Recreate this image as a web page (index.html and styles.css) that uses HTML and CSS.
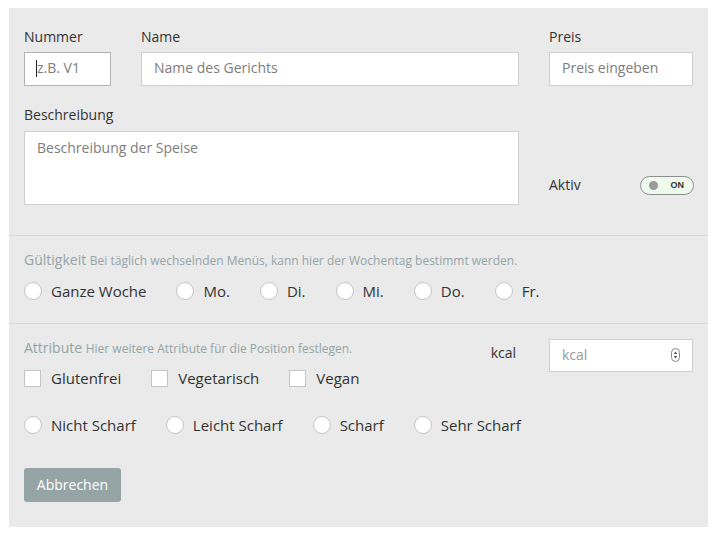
FILE: index.html
```html
<!DOCTYPE html>
<html lang="de">
<head>
<meta charset="utf-8">
<title>Position bearbeiten</title>
<link rel="stylesheet" href="styles.css">
</head>
<body>
<form class="panel">
  <section class="section section-main">
    <div class="grid">
      <div class="field">
        <label class="label">Nummer</label>
        <div class="input-wrap">
          <input class="input input-focus" type="text" placeholder="z.B. V1">
          <span class="caret"></span>
        </div>
      </div>
      <div class="field">
        <label class="label">Name</label>
        <input class="input" type="text" placeholder="Name des Gerichts">
      </div>
      <div class="field">
        <label class="label">Preis</label>
        <input class="input" type="text" placeholder="Preis eingeben">
      </div>
      <div class="field field-desc">
        <label class="label">Beschreibung</label>
        <textarea class="input textarea" placeholder="Beschreibung der Speise"></textarea>
      </div>
      <div class="aktiv">
        <span class="aktiv-label">Aktiv</span>
        <span class="toggle"><span class="toggle-dot"></span><span class="toggle-text">ON</span></span>
      </div>
    </div>
  </section>

  <section class="section section-days">
    <h3 class="heading">Gültigkeit <small class="sub">Bei täglich wechselnden Menüs, kann hier der Wochentag bestimmt werden.</small></h3>
    <div class="options">
      <label class="opt"><input type="radio" name="day" class="radio"><span>Ganze Woche</span></label>
      <label class="opt"><input type="radio" name="day" class="radio"><span>Mo.</span></label>
      <label class="opt"><input type="radio" name="day" class="radio"><span>Di.</span></label>
      <label class="opt"><input type="radio" name="day" class="radio"><span>Mi.</span></label>
      <label class="opt"><input type="radio" name="day" class="radio"><span>Do.</span></label>
      <label class="opt"><input type="radio" name="day" class="radio"><span>Fr.</span></label>
    </div>
  </section>

  <section class="section section-attr">
    <div class="attr-grid">
      <div class="attr-left">
        <div class="attr-head">
          <h3 class="heading">Attribute <small class="sub">Hier weitere Attribute für die Position festlegen.</small></h3>
          <span class="kcal-label">kcal</span>
        </div>
        <div class="options">
          <label class="opt opt-cb"><input type="checkbox" class="checkbox"><span>Glutenfrei</span></label>
          <label class="opt opt-cb"><input type="checkbox" class="checkbox"><span>Vegetarisch</span></label>
          <label class="opt opt-cb"><input type="checkbox" class="checkbox"><span>Vegan</span></label>
        </div>
      </div>
      <div class="kcal-wrap">
        <input class="input kcal" type="text" placeholder="kcal">
        <svg class="spinner" width="9" height="14" viewBox="0 0 9 14" aria-hidden="true">
          <rect x="0.5" y="0.5" width="8" height="13" rx="4" fill="#fff" stroke="#8a8a8a"/>
          <path d="M4.5 3.6 L6.3 6 L2.7 6 Z" fill="#555"/>
          <path d="M4.5 10.4 L6.3 8 L2.7 8 Z" fill="#555"/>
        </svg>
      </div>
    </div>
    <div class="options options-spice">
      <label class="opt"><input type="radio" name="spice" class="radio"><span>Nicht Scharf</span></label>
      <label class="opt"><input type="radio" name="spice" class="radio"><span>Leicht Scharf</span></label>
      <label class="opt"><input type="radio" name="spice" class="radio"><span>Scharf</span></label>
      <label class="opt"><input type="radio" name="spice" class="radio"><span>Sehr Scharf</span></label>
    </div>
    <button type="button" class="btn">Abbrechen</button>
  </section>
</form>
</body>
</html>
```

FILE: styles.css
```css
* { box-sizing: border-box; }

html, body { background: #fff; }

body {
  margin: 8px 7px 0 9px;
  font-family: "Open Sans", "Liberation Sans", sans-serif;
  color: #333;
  font-size: 14px;
}

.panel {
  background: #eaeaea;
  padding: 0 15px 25px;
}

.section {
  border-bottom: 1px solid #d6d6d6;
  margin: 0 -15px;
  padding-left: 15px;
  padding-right: 15px;
}

.section-main { padding-top: 19px; padding-bottom: 30px; }
.section-days { padding-top: 14px; padding-bottom: 21px; }
.section-attr { padding-top: 14px; border-bottom: 0; }

.grid {
  display: grid;
  grid-template-columns: 87px 378px 144px;
  column-gap: 30px;
  row-gap: 19px;
}

.field { display: flex; flex-direction: column; }
.field-desc { grid-column: 1 / 3; }

.label {
  font-size: 14px;
  line-height: 20px;
  margin-bottom: 5px;
  color: #333;
}
.field-desc .label { margin-bottom: 6px; }

.input-wrap { position: relative; }

.input {
  display: block;
  width: 100%;
  height: 34px;
  border: 1px solid #cfcfcf;
  background: #fff;
  border-radius: 0;
  padding: 0 12px 3px;
  font-family: "Open Sans", "Liberation Sans", sans-serif;
  font-size: 14px;
  color: #333;
  outline: none;
}
.input::placeholder { color: #7d7d7d; }
.input-focus { border-color: #b3b3b3; }

.caret {
  position: absolute;
  left: 12px;
  top: 8px;
  width: 1px;
  height: 17px;
  background: #222;
}

.textarea {
  height: 74px;
  padding: 6px 12px;
  resize: none;
  line-height: 20px;
}

.aktiv {
  align-self: end;
  margin-bottom: 10px;
  display: flex;
  justify-content: space-between;
  align-items: center;
}
.aktiv-label { font-size: 14px; line-height: 20px; }

.toggle {
  width: 54px;
  height: 19px;
  margin-right: -1px;
  border: 1px solid #8e8e8e;
  border-radius: 10px;
  background: #eefaee;
  display: flex;
  align-items: center;
  padding: 0 9px 0 8px;
  justify-content: space-between;
}
.toggle-dot {
  width: 9px;
  height: 9px;
  border-radius: 50%;
  background: #9a9a9a;
}
.toggle-text {
  font-family: "Liberation Sans", Arial, sans-serif;
  font-size: 9px;
  font-weight: 700;
  color: #333;
}

.heading {
  margin: 0;
  font-size: 14px;
  line-height: 20px;
  height: 20px;
  font-weight: 400;
  color: #95a5a6;
}
.sub { font-size: 12px; line-height: 20px; }

.options {
  display: flex;
  margin-top: 9px;
}
.section-days .options { margin-top: 10px; }

.opt {
  display: flex;
  align-items: center;
  height: 22px;
  font-size: 15px;
  line-height: 22px;
  color: #333;
  margin-right: 30px;
}
.opt span { margin-left: 9px; }
.opt-cb span { margin-left: 10px; }

.radio, .checkbox {
  -webkit-appearance: none;
  appearance: none;
  margin: 0;
  background: #fff;
  border: 1px solid #c4c4c4;
  flex: none;
}
.radio {
  width: 18px;
  height: 18px;
  border-radius: 50%;
}
.checkbox {
  width: 17px;
  height: 17px;
  border-radius: 0;
}

.attr-grid {
  display: grid;
  grid-template-columns: 495px 144px;
  column-gap: 30px;
}

.attr-head {
  display: flex;
  justify-content: space-between;
  align-items: flex-start;
  height: 20px;
}
.kcal-label {
  font-size: 14px;
  line-height: 20px;
  margin-top: 5px;
  margin-right: 3px;
}

.kcal-wrap { position: relative; margin-top: 1px; height: 33px; }
.kcal { height: 33px; }
.kcal::placeholder { color: #999; }
.spinner {
  position: absolute;
  right: 13px;
  top: 9px;
}

.options-spice { margin-top: 25px; }

.btn {
  display: block;
  margin-top: 32px;
  width: 97px;
  height: 34px;
  border: 0;
  border-radius: 3px;
  background: #95a5a6;
  color: #fff;
  font-family: "Open Sans", "Liberation Sans", sans-serif;
  font-size: 14px;
  padding: 0 0 2px;
}
```
